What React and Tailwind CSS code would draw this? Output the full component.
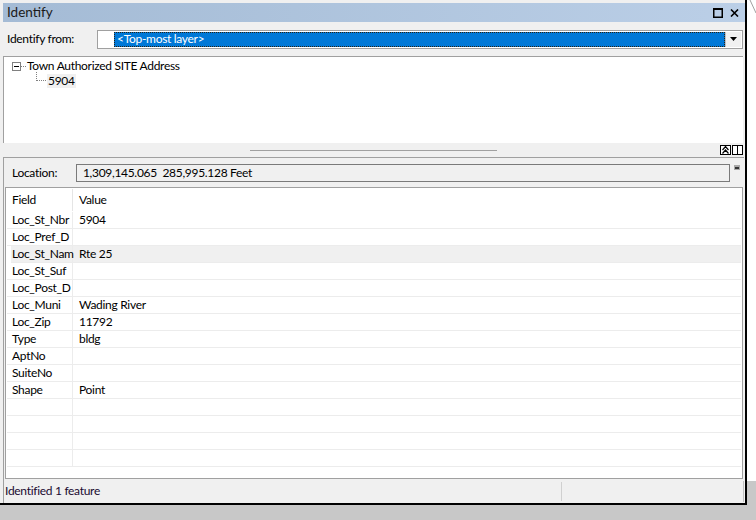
import React from "react";

const rows = [
  ["Loc_St_Nbr", "5904"],
  ["Loc_Pref_D", ""],
  ["Loc_St_Nam", "Rte 25", true],
  ["Loc_St_Suf", ""],
  ["Loc_Post_D", ""],
  ["Loc_Muni", "Wading River"],
  ["Loc_Zip", "11792"],
  ["Type", "bldg"],
  ["AptNo", ""],
  ["SuiteNo", ""],
  ["Shape", "Point"],
  ["", ""],
  ["", ""],
  ["", ""],
  ["", ""],
];

export default function App() {
  return (
    <div className="w-[756px] h-[520px] overflow-hidden flex flex-col bg-[#c8c8c8] text-[12px] tracking-[-0.3px] leading-none text-black font-['Lato',sans-serif]">
      <div className="flex h-[505px]">
        {/* panel */}
        <div className="w-[745px] flex flex-col bg-[#f0f0f0] pl-[3px] pt-[3px] border-b-2 border-black">
          {/* title bar */}
          <div className="h-[19px] flex items-center bg-gradient-to-r from-[#a4bbd5] to-[#bbcfe7] pl-[4px] pr-[6px]">
            <span className="text-[13.5px] tracking-normal text-[#1a1a1a]">Identify</span>
            <div className="flex-1" />
            <svg width="10" height="10" viewBox="0 0 10 10" className="mr-[7px]">
              <rect x="0.75" y="0.75" width="8.5" height="8.5" fill="none" stroke="#000" strokeWidth="1.5" />
              <rect x="0" y="0" width="10" height="2" fill="#000" />
            </svg>
            <svg width="9" height="8" viewBox="0 0 9 8">
              <path d="M1 0.5 L8 7.5 M8 0.5 L1 7.5" stroke="#000" strokeWidth="1.6" />
            </svg>
          </div>
          {/* identify from */}
          <div className="h-[34px] flex items-center pl-[4px] pr-[2px]">
            <span className="w-[90px]">Identify from:</span>
            <div className="flex-1 h-[19px] flex border border-[#a0a0a0] bg-white p-[1px]">
              <div className="w-[15px] bg-white" />
              <div className="flex-1 bg-[#0078d7] border border-dotted border-[#2a2010] flex items-center pl-[2px] text-white">
                &lt;Top-most layer&gt;
              </div>
              <div className="w-[16px] bg-[#f0f0f0] border-l border-[#c0c0c0] flex items-center justify-center">
                <svg width="7" height="4" viewBox="0 0 7 4"><path d="M0 0 H7 L3.5 4 Z" fill="#000" /></svg>
              </div>
            </div>
          </div>
          {/* tree */}
          <div className="h-[87px] mr-[2px] bg-white border-t border-l border-[#a0a0a0] pt-[4px] pl-[8px]">
            <div className="flex items-center h-[10px]">
              <div className="w-[9px] h-[9px] border border-[#808080] flex items-center justify-center">
                <div className="w-[5px] h-px bg-black" />
              </div>
              <div className="w-[5px] border-t border-dotted border-[#808080]" />
              <span className="ml-[1px]">Town Authorized SITE Address</span>
            </div>
            <div className="flex mt-[1px]">
              <div className="ml-[24px] w-[10px] h-[9px] border-l border-b border-dotted border-[#808080]" />
              <span className="mt-[2px] ml-px bg-[#f0f0f0] px-[1px] h-[14px] flex items-center">5904</span>
            </div>
          </div>
          {/* splitter */}
          <div className="h-[14px] flex items-center">
            <div className="w-[247px] h-px bg-[#a0a0a0] ml-[247px]" />
            <div className="flex-1" />
            <div className="w-[11px] h-[10px] border border-black bg-white flex items-center justify-center mr-[1px]">
              <svg width="7" height="8" viewBox="0 0 7 8">
                <path d="M0.5 4 L3.5 0.5 L6.5 4 M0.5 7.5 L3.5 4 L6.5 7.5" stroke="#000" strokeWidth="1.2" fill="none" />
              </svg>
            </div>
            <div className="w-[11px] h-[10px] border border-black bg-white flex items-center justify-center mr-[2px]">
              <div className="w-px h-[8px] bg-black" />
            </div>
          </div>
          {/* lower section */}
          <div className="flex-1 flex flex-col border-t border-l border-[#a0a0a0] mr-[1px]">
            <div className="h-[29px] flex items-center pl-[8px] pr-[4px]">
              <span className="w-[64px]">Location:</span>
              <div className="w-[655px] h-[18px] border border-[#7a7a7a] bg-[#f0f0f0] flex items-center pl-[6px]">
                1,309,145.065&nbsp;&nbsp;285,995.128 Feet
              </div>
              <div className="ml-[4px] w-[6px] h-[5px] bg-[#a8a8a8] self-start mt-[7px] flex items-center justify-center">
                <div className="w-[4px] h-[2px] bg-[#333]" />
              </div>
            </div>
            <div className="h-[292px] ml-[1px] mr-[1px] border border-[#a0a0a0] bg-white flex flex-col pl-[1px] pr-[1px] overflow-hidden">
              <div className="h-[24px] shrink-0 flex items-center">
                <div className="w-[66px] h-[22px] border-r border-[#e5e5e5] flex items-center pl-[5px]">Field</div>
                <div className="flex-1 pl-[6px]">Value</div>
              </div>
              {rows.map(([f, v, hl], i) => (
                <div
                  key={i}
                  className={`h-[17px] shrink-0 flex border-b border-[#ececec] ${hl ? "bg-[#f0f0f0] ml-[4px]" : ""}`}
                >
                  <div className={`${hl ? "w-[62px] pl-px" : "w-[66px] pl-[5px]"} border-r border-[#ececec] flex items-center whitespace-nowrap`}>{f}</div>
                  <div className="flex-1 pl-[6px] flex items-center">{v}</div>
                </div>
              ))}
            </div>
            <div className="flex-1 flex items-center">
              <span className="pl-[1px] text-[#1a0a30]">Identified 1 feature</span>
              <div className="flex-1" />
              <div className="w-px h-[19px] bg-[#d0d0d0] mr-[181px]" />
              <div className="w-px h-[21px] bg-[#c0c0c0]" />
            </div>
          </div>
        </div>
        <div className="w-[2px] bg-black" />
        <div className="flex-1 flex flex-col">
          <div className="flex-1 bg-white">
            <svg width="9" height="14" viewBox="0 0 9 14">
              <path d="M3 0 L9 13" stroke="#a0a0a0" strokeWidth="1" />
            </svg>
          </div>
          <div className="h-[24px] bg-[#c8c8c8]" />
        </div>
      </div>
      <div className="flex-1 bg-[#c8c8c8]" />
    </div>
  );
}
